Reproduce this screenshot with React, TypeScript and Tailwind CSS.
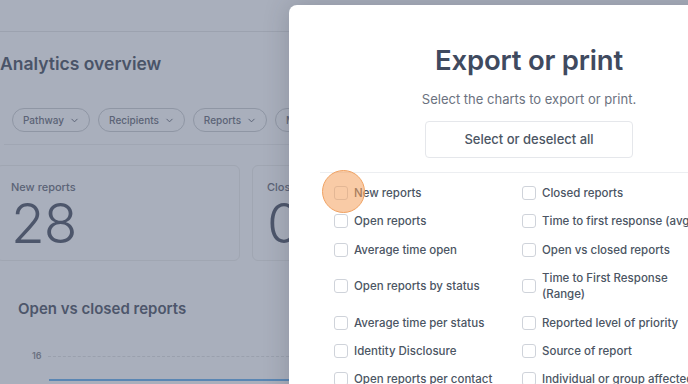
import React from "react";

const left = [
  "New reports",
  "Open reports",
  "Average time open",
  "Open reports by status",
  "Average time per status",
  "Identity Disclosure",
  "Open reports per contact",
];
const right = [
  "Closed reports",
  "Time to first response (avg)",
  "Open vs closed reports",
  "Time to First Response (Range)",
  "Reported level of priority",
  "Source of report",
  "Individual or group affected",
];

function Chevron() {
  return (
    <svg width="9" height="9" viewBox="0 0 10 10" fill="none" className="ml-[6px]">
      <path d="M2 3.5 L5 6.5 L8 3.5" stroke="#5b6376" strokeWidth="1.1" strokeLinecap="round" strokeLinejoin="round" />
    </svg>
  );
}

function Pill({ label }: { label: string }) {
  return (
    <div className="h-[24px] flex items-center rounded-full border border-[#8f96a4] pl-[10px] pr-[10px] text-[10px] font-medium text-[#5b6376] shrink-0">
      {label}
      <Chevron />
    </div>
  );
}

function Check({ label }: { label: string }) {
  return (
    <div className="flex items-center">
      <div className="w-[14px] h-[14px] rounded-[3px] border border-[#cfd3da] bg-white shrink-0" />
      <span className="ml-[6px] text-[11.5px] leading-[16px] font-medium text-[#4b5563]">{label}</span>
    </div>
  );
}

export default function App() {
  const rows = left.map((l, i) => [l, right[i]]);
  return (
    <div
      className="relative w-[688px] h-[384px] overflow-hidden bg-[#a9afbc]"
      style={{ fontFamily: "Inter, 'Noto Sans', sans-serif" }}
    >
      {/* background page */}
      <div className="w-[289px] flex flex-col">
        <div className="h-[32px] border-b border-[#9ca2af]" />
        <div className="h-[63px] flex items-center pt-[2px] text-[17.5px] font-semibold text-[#4a5468]">
          Analytics overview
        </div>
        <div className="flex gap-[8px] pl-[12px] mt-[13px] h-[24px]">
          <Pill label="Pathway" />
          <Pill label="Recipients" />
          <Pill label="Reports" />
          <Pill label="More" />
        </div>
        <div className="ml-[4px] mt-[12px] border-b border-[#a0a6b3]" />
        <div className="flex gap-[12px] ml-[-4px] mt-[20px]">
          <div className="w-[244px] h-[96px] shrink-0 rounded-[6px] border border-[#a0a6b2] px-[14px] pt-[14px]">
            <div className="text-[11px] font-medium text-[#5b6376] leading-[14px]">New reports</div>
            <div className="text-[55px] font-light text-[#4d566b] leading-[60px] mt-[-1px] tracking-[-1px]">28</div>
          </div>
          <div className="w-[244px] h-[96px] shrink-0 rounded-[6px] border border-[#a0a6b2] px-[14px] pt-[14px]">
            <div className="text-[11px] font-medium text-[#5b6376] leading-[14px]">Closed reports</div>
            <div className="text-[55px] font-light text-[#4d566b] leading-[60px] mt-[-1px]">0</div>
          </div>
        </div>
        <div className="pl-[18px] mt-[38px] text-[15px] font-semibold text-[#4d566b] leading-[20px]">
          Open vs closed reports
        </div>
        <div className="flex items-center mt-[31px] pl-[32px] h-[12px]">
          <span className="text-[9px] font-semibold text-[#6b7282] w-[16px] leading-[12px]">16</span>
          <div className="flex-1 border-t border-dashed border-[#9aa0ad]" />
        </div>
        <div className="ml-[49px] mt-[17px] h-[2px] bg-[#5a86b3]" />
      </div>

      {/* modal */}
      <div className="absolute left-[289px] top-[5px] w-[480px] h-[420px] bg-white rounded-[8px] shadow-[0_0_26px_rgba(40,45,60,0.22)] px-[31px] pt-[38px] flex flex-col items-center">
        <div className="text-[27.5px] leading-[34px] font-semibold text-[#3f4a5f] tracking-[-0.2px]">Export or print</div>
        <div className="mt-[12px] text-[13px] leading-[20px] text-[#6b7280]">Select the charts to export or print.</div>
        <div className="mt-[12px] w-[208px] h-[37px] flex items-center justify-center rounded-[4px] border border-[#e5e7eb] text-[13px] font-medium text-[#4b5563]">
          Select or deselect all
        </div>
        <div className="self-stretch mt-[14px] border-t border-[#eceef1]" />
        <div className="self-stretch pl-[14px] pt-[12px] grid grid-cols-[188px_185px] gap-y-[12.4px]">
          {rows.map(([a, b], i) => (
            <React.Fragment key={i}>
              <Check label={a} />
              <Check label={b} />
            </React.Fragment>
          ))}
        </div>
      </div>

      {/* click highlight */}
      <div className="absolute left-[322px] top-[170px] w-[43px] h-[43px] rounded-full bg-[rgba(244,160,92,0.55)] border border-[#f0a262]" />
    </div>
  );
}
